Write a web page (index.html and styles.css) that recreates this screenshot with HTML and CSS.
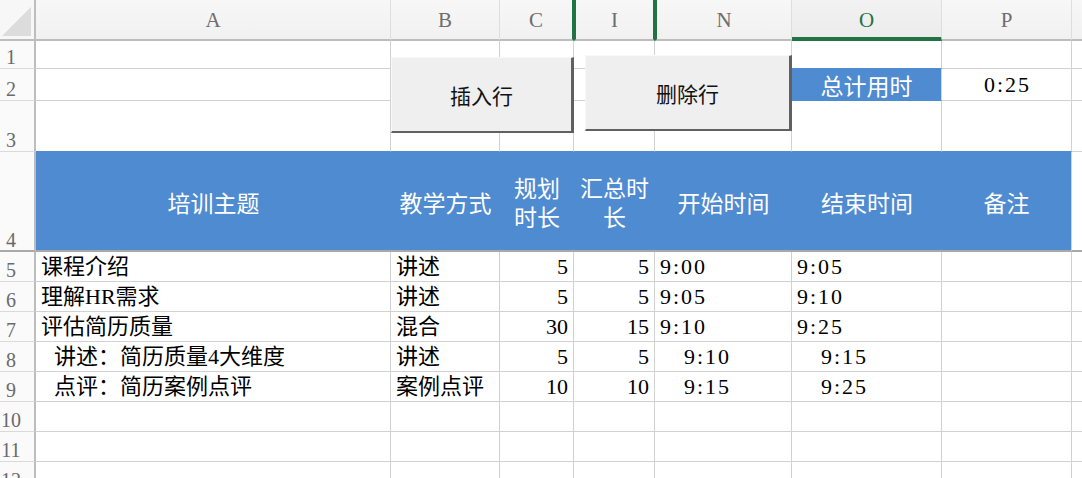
FILE: index.html
```html
<!DOCTYPE html>
<html lang="zh">
<head>
<meta charset="utf-8">
<title>培训时间表</title>
<link rel="stylesheet" href="styles.css">
</head>
<body>
<div class="sheet">
  <div class="grid">
    <!-- column header row -->
    <div class="ch corner"></div>
    <div class="ch">A</div>
    <div class="ch">B</div>
    <div class="ch hid-r">C</div>
    <div class="ch hid-l hid-r">I</div>
    <div class="ch hid-l">N</div>
    <div class="ch sel">O</div>
    <div class="ch">P</div>
    <div class="ch"></div>

    <!-- row 1 -->
    <div class="rh">1</div>
    <div class="c"></div><div class="c"></div><div class="c"></div><div class="c"></div><div class="c"></div>
    <div class="c above-blue"></div><div class="c"></div><div class="c"></div>

    <!-- row 2 -->
    <div class="rh">2</div>
    <div class="c"></div><div class="c"></div><div class="c"></div><div class="c"></div><div class="c"></div>
    <div class="c total-label">总计用时</div>
    <div class="c total-value">0:25</div>
    <div class="c"></div>

    <!-- row 3 -->
    <div class="rh">3</div>
    <div class="c above-blue"></div><div class="c above-blue"></div><div class="c above-blue"></div><div class="c above-blue"></div>
    <div class="c above-blue"></div><div class="c above-blue"></div><div class="c above-blue"></div><div class="c"></div>

    <!-- row 4 header -->
    <div class="rh r4">4</div>
    <div class="h">培训主题</div>
    <div class="h">教学方式</div>
    <div class="h two"><span class="ln">规划</span><span class="ln">时长</span></div>
    <div class="h two"><span class="ln">汇总时</span><span class="ln">长</span></div>
    <div class="h">开始时间</div>
    <div class="h">结束时间</div>
    <div class="h last">备注</div>
    <div class="c r4c"></div>

    <!-- row 5 -->
    <div class="rh">5</div>
    <div class="c t">课程介绍</div>
    <div class="c t">讲述</div>
    <div class="c n">5</div>
    <div class="c n">5</div>
    <div class="c tm">9:00</div>
    <div class="c tm">9:05</div>
    <div class="c"></div><div class="c"></div>

    <!-- row 6 -->
    <div class="rh">6</div>
    <div class="c t">理解HR需求</div>
    <div class="c t">讲述</div>
    <div class="c n">5</div>
    <div class="c n">5</div>
    <div class="c tm">9:05</div>
    <div class="c tm">9:10</div>
    <div class="c"></div><div class="c"></div>

    <!-- row 7 -->
    <div class="rh">7</div>
    <div class="c t">评估简历质量</div>
    <div class="c t">混合</div>
    <div class="c n">30</div>
    <div class="c n">15</div>
    <div class="c tm">9:10</div>
    <div class="c tm">9:25</div>
    <div class="c"></div><div class="c"></div>

    <!-- row 8 -->
    <div class="rh">8</div>
    <div class="c t sub">讲述：简历质量4大维度</div>
    <div class="c t">讲述</div>
    <div class="c n">5</div>
    <div class="c n">5</div>
    <div class="c tm sub">9:10</div>
    <div class="c tm sub">9:15</div>
    <div class="c"></div><div class="c"></div>

    <!-- row 9 -->
    <div class="rh">9</div>
    <div class="c t sub">点评：简历案例点评</div>
    <div class="c t">案例点评</div>
    <div class="c n">10</div>
    <div class="c n">10</div>
    <div class="c tm sub">9:15</div>
    <div class="c tm sub">9:25</div>
    <div class="c"></div><div class="c"></div>

    <!-- rows 10-12 -->
    <div class="rh">10</div>
    <div class="c"></div><div class="c"></div><div class="c"></div><div class="c"></div><div class="c"></div><div class="c"></div><div class="c"></div><div class="c"></div>
    <div class="rh">11</div>
    <div class="c"></div><div class="c"></div><div class="c"></div><div class="c"></div><div class="c"></div><div class="c"></div><div class="c"></div><div class="c"></div>
    <div class="rh">12</div>
    <div class="c"></div><div class="c"></div><div class="c"></div><div class="c"></div><div class="c"></div><div class="c"></div><div class="c"></div><div class="c"></div>
  </div>

  <div class="btn btn-insert">插入行</div>
  <div class="btn btn-delete">删除行</div>
</div>
</body>
</html>
```

FILE: styles.css
```css
* { box-sizing: border-box; }

html, body {
  margin: 0;
  padding: 0;
  background: #ffffff;
  overflow: hidden;
}

.sheet {
  position: relative;
  width: 1082px;
  height: 478px;
  overflow: hidden;
  font-family: "Liberation Serif", "Noto Sans CJK SC", serif;
  font-size: 22px;
  color: #000;
}

.grid {
  display: grid;
  grid-template-columns: 36px 355px 109px 74px 81px 137px 150px 130px 60px;
  grid-template-rows: 41px 28px 32px 51px 100px repeat(8, 30px);
}

/* generic cell */
.c {
  border-right: 1px solid #d2d2d2;
  border-bottom: 1px solid #d2d2d2;
  display: flex;
  align-items: center;
  line-height: 24px;
  white-space: nowrap;
  overflow: hidden;
}

/* column headers */
.ch {
  background: linear-gradient(#f7f7f7, #f1f1f1);
  border-right: 1px solid #dedede;
  border-bottom: 2px solid #bdbdbd;
  display: flex;
  align-items: center;
  justify-content: center;
  font-family: "Liberation Serif", serif;
  font-size: 21px;
  color: #6e6e6e;
  padding-top: 1px;
}
.ch.hid-r { border-right: 2px solid #217346; }
.ch.hid-l { border-left: 2px solid #217346; }
.ch.sel {
  color: #217346;
  background: linear-gradient(#f2f2f2, #ececec);
  border-bottom: 4px solid #217346;
  padding-top: 3px;
}

.corner {
  position: relative;
  background: #f7f7f7;
  border-right: 2px solid #bdbdbd;
}
.corner::after {
  content: "";
  position: absolute;
  left: 2px;
  top: 7px;
  width: 29px;
  height: 29px;
  background: #dcdcdc;
  clip-path: polygon(100% 0, 100% 100%, 0 100%);
}

/* row headers */
.rh {
  background: #fafafa;
  border-right: 2px solid #bdbdbd;
  border-bottom: 1px solid #dadada;
  display: flex;
  align-items: flex-end;
  justify-content: center;
  padding-right: 12px;
  padding-bottom: 1px;
  font-family: "Liberation Serif", serif;
  font-size: 20px;
  line-height: 20px;
  color: #6a6a6a;
}
.rh.r4 { border-bottom: 2px solid #a9a9a9; padding-bottom: 0; }

.above-blue { border-bottom-color: #4f8bd0; }

/* blue header row */
.h {
  background: #4f8bd0;
  border-bottom: 2px solid #a9a9a9;
  display: flex;
  flex-direction: column;
  align-items: center;
  justify-content: center;
  text-align: center;
  font-family: "Noto Sans CJK SC", sans-serif;
  font-size: 23px;
  line-height: 29px;
  color: #ffffff;
  padding-top: 2px;
}
.h .ln { display: block; height: 29px; line-height: 29px; }
.h.last { border-right: 1px solid #d2d2d2; }
.r4c { border-bottom: 2px solid #a9a9a9; }

/* total */
.total-label {
  background: #4f8bd0;
  border-bottom-color: #4f8bd0;
  justify-content: center;
  font-family: "Noto Sans CJK SC", sans-serif;
  font-size: 23px;
  color: #ffffff;
}
.total-value {
  justify-content: center;
  letter-spacing: 2px;
  padding-left: 2px;
}

/* data cells */
.t { padding-left: 5px; }
.t.sub { padding-left: 18px; }
.n { justify-content: flex-end; padding-right: 5px; }
.tm { padding-left: 5px; letter-spacing: 2px; }
.tm.sub { padding-left: 29px; }

/* buttons (floating form controls over the sheet) */
.btn {
  position: absolute;
  display: flex;
  align-items: center;
  justify-content: center;
  background: #efefef;
  border-top: 1px solid #f8f8f8;
  border-left: 1px solid #f8f8f8;
  border-right: 3px solid #606060;
  border-bottom: 2px solid #606060;
  font-family: "Noto Sans CJK SC", sans-serif;
  font-size: 21px;
  color: #111;
  padding-top: 1px;
}
.btn-insert {
  left: 391px;
  top: 57px;
  width: 183px;
  height: 76px;
}
.btn-delete {
  left: 585px;
  top: 55px;
  width: 207px;
  height: 76px;
}
```
